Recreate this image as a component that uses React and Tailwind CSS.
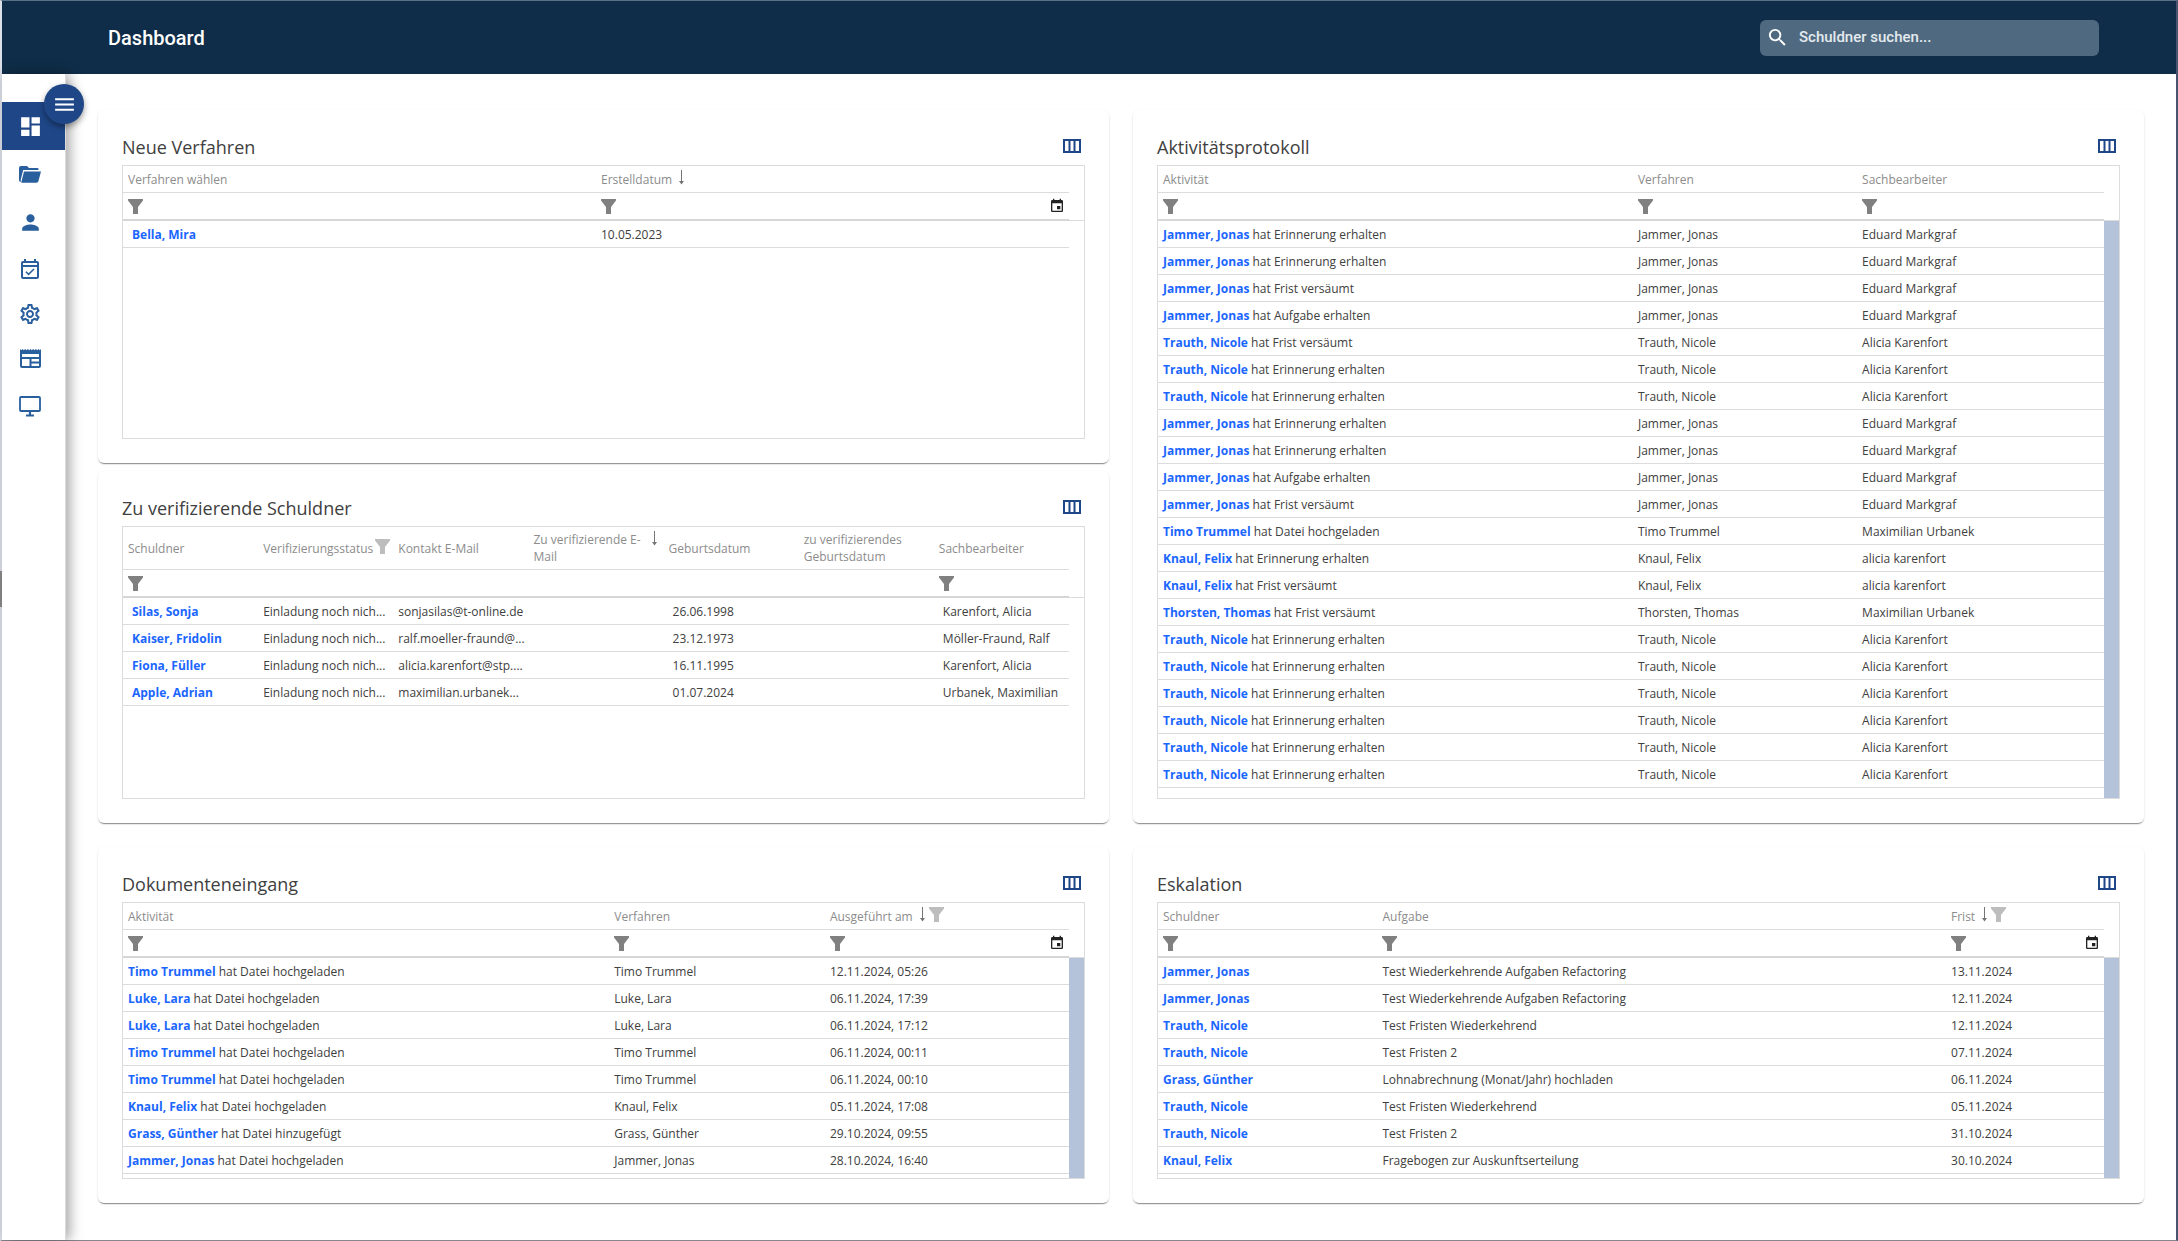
import { useState } from 'react';
import {
  MdDashboard,
  MdEvent,
  MdMenu,
  MdOutlineEventAvailable,
  MdOutlineSettings,
  MdPerson,
  MdSearch,
} from 'react-icons/md';

function FolderIcon() {
  return (
    <svg viewBox="0 0 22 17" className="h-[17px] w-[22px]" fill="currentColor" aria-hidden="true">
      <path d="M2 0h6l2 2h8.500a1 1 0 0 1 1 1v1H4.200L1.800 13.500V16A2 2 0 0 1 0 14V2a2 2 0 0 1 2-2z" />
      <path d="M5 5.500h17l-2.600 9.700a2 2 0 0 1-1.900 1.500H2.200z" />
    </svg>
  );
}

function NewsIcon() {
  return (
    <svg viewBox="0 0 21 19" className="h-[19px] w-[21px]" fill="currentColor" aria-hidden="true">
      <path
        fillRule="evenodd"
        d="M0 0l1.200 1.200L2.500 0l1.300 1.200L5.200 0l1.300 1.200L7.900 0l1.300 1.200L10.500 0l1.300 1.200L13.100 0l1.400 1.200L15.800 0l1.400 1.200L18.500 0l1.300 1.200L21 0v17a2 2 0 0 1-2 2H2a2 2 0 0 1-2-2zM2 5v3h17V5zM2 10v7h7.500v-7zM11.500 10v2.500H19V10zM11.500 14.500V17H19v-2.500z"
      />
    </svg>
  );
}

function MonitorIcon() {
  return (
    <svg viewBox="0 0 22 21" className="h-[21px] w-[22px]" fill="none" stroke="currentColor" strokeWidth="1.800" aria-hidden="true">
      <rect x="1" y="1" width="20" height="14" rx="1" />
      <path d="M11 15v5M7 19.500h8" strokeWidth="2.200" />
    </svg>
  );
}

const NAV = [
  { label: 'Dashboard',     icon: MdDashboard,             size: 25, height: 'h-12', active: true },
  { label: 'Verfahren',     icon: FolderIcon,              height: 'h-12' },
  { label: 'Schuldner',     icon: MdPerson,                size: 25, height: 'h-12' },
  { label: 'Termine',       icon: MdOutlineEventAvailable, size: 24, height: 'h-12' },
  { label: 'Einstellungen', icon: MdOutlineSettings,       size: 24, height: 'h-10' },
  { label: 'Nachrichten',   icon: NewsIcon,                height: 'h-12' },
  { label: 'Bildschirm',    icon: MonitorIcon,             height: 'h-12' },
];

const JAMMER = ['Jammer, Jonas', 'Eduard Markgraf'];
const TRAUTH = ['Trauth, Nicole', 'Alicia Karenfort'];
const TRUMMEL = ['Timo Trummel', 'Maximilian Urbanek'];
const KNAUL = ['Knaul, Felix', 'alicia karenfort'];
const THORSTEN = ['Thorsten, Thomas', 'Maximilian Urbanek'];

const ACTIVITIES = [
  [JAMMER, 'hat Erinnerung erhalten'],
  [JAMMER, 'hat Erinnerung erhalten'],
  [JAMMER, 'hat Frist versäumt'],
  [JAMMER, 'hat Aufgabe erhalten'],
  [TRAUTH, 'hat Frist versäumt'],
  [TRAUTH, 'hat Erinnerung erhalten'],
  [TRAUTH, 'hat Erinnerung erhalten'],
  [JAMMER, 'hat Erinnerung erhalten'],
  [JAMMER, 'hat Erinnerung erhalten'],
  [JAMMER, 'hat Aufgabe erhalten'],
  [JAMMER, 'hat Frist versäumt'],
  [TRUMMEL, 'hat Datei hochgeladen'],
  [KNAUL, 'hat Erinnerung erhalten'],
  [KNAUL, 'hat Frist versäumt'],
  [THORSTEN, 'hat Frist versäumt'],
  [TRAUTH, 'hat Erinnerung erhalten'],
  [TRAUTH, 'hat Erinnerung erhalten'],
  [TRAUTH, 'hat Erinnerung erhalten'],
  [TRAUTH, 'hat Erinnerung erhalten'],
  [TRAUTH, 'hat Erinnerung erhalten'],
  [TRAUTH, 'hat Erinnerung erhalten'],
];

const DOCUMENTS = [
  ['Timo Trummel', 'hat Datei hochgeladen', '12.11.2024, 05:26'],
  ['Luke, Lara', 'hat Datei hochgeladen', '06.11.2024, 17:39'],
  ['Luke, Lara', 'hat Datei hochgeladen', '06.11.2024, 17:12'],
  ['Timo Trummel', 'hat Datei hochgeladen', '06.11.2024, 00:11'],
  ['Timo Trummel', 'hat Datei hochgeladen', '06.11.2024, 00:10'],
  ['Knaul, Felix', 'hat Datei hochgeladen', '05.11.2024, 17:08'],
  ['Grass, Günther', 'hat Datei hinzugefügt', '29.10.2024, 09:55'],
  ['Jammer, Jonas', 'hat Datei hochgeladen', '28.10.2024, 16:40'],
];

const ESCALATIONS = [
  ['Jammer, Jonas', 'Test Wiederkehrende Aufgaben Refactoring', '13.11.2024'],
  ['Jammer, Jonas', 'Test Wiederkehrende Aufgaben Refactoring', '12.11.2024'],
  ['Trauth, Nicole', 'Test Fristen Wiederkehrend', '12.11.2024'],
  ['Trauth, Nicole', 'Test Fristen 2', '07.11.2024'],
  ['Grass, Günther', 'Lohnabrechnung (Monat/Jahr) hochladen', '06.11.2024'],
  ['Trauth, Nicole', 'Test Fristen Wiederkehrend', '05.11.2024'],
  ['Trauth, Nicole', 'Test Fristen 2', '31.10.2024'],
  ['Knaul, Felix', 'Fragebogen zur Auskunftserteilung', '30.10.2024'],
];

const DEBTORS = [
  ['Silas, Sonja', 'sonjasilas@t-online.de', '26.06.1998', 'Karenfort, Alicia'],
  ['Kaiser, Fridolin', 'ralf.moeller-fraund@...', '23.12.1973', 'Möller-Fraund, Ralf'],
  ['Fiona, Füller', 'alicia.karenfort@stp....', '16.11.1995', 'Karenfort, Alicia'],
  ['Apple, Adrian', 'maximilian.urbanek...', '01.07.2024', 'Urbanek, Maximilian'],
];

function Funnel({ className }) {
  return (
    <svg viewBox="0 0 15 15" className={`size-[15px] shrink-0 ${className}`} fill="currentColor" aria-hidden="true">
      <path d="M0 0h15v1.600L10 8v7H5V8L0 1.600z" />
    </svg>
  );
}

function SortArrow() {
  return (
    <svg viewBox="0 0 7 15" className="h-[15px] w-[7px] shrink-0 text-[#757575]" fill="currentColor" aria-hidden="true">
      <path d="M3 0h1v11h2L3.500 14.500 1 11h2z" />
    </svg>
  );
}

function ColumnsIcon() {
  return (
    <svg viewBox="0 0 18 14" className="h-[14px] w-[18px]" fill="none" stroke="currentColor" strokeWidth="2" aria-hidden="true">
      <path d="M1 1h16v12H1zM6.500 1v12M11.500 1v12" />
    </svg>
  );
}

function Name({ children }) {
  return <a href="#" className="font-bold text-[#1a66ff]">{children}</a>;
}

function HeaderCell({ column }) {
  return (
    <th scope="col" className="border-b border-[#dcdcdc] px-[5px] text-left font-normal text-[#8c8c8c]">
      <div className="flex items-center">
        <span>{column.label}</span>
        {column.sorted && (
          <span className={`mr-px ml-1.5 flex pb-1 ${column.wraps ? 'self-start' : ''}`}><SortArrow /></span>
        )}
        {column.filtered && <span className="ml-0.5 flex pb-1"><Funnel className="text-[#bdbdbd]" /></span>}
      </div>
    </th>
  );
}

function FilterCell({ column }) {
  return (
    <td className="border-b-2 border-[#d6d6d6] px-1">
      <div className="flex items-center justify-between">
        {column.filter && (
          <button type="button" aria-label={`${column.label} filtern`} className="px-px">
            <Funnel className="text-[#808080]" />
          </button>
        )}
        {column.date && (
          <button type="button" aria-label="Datum wählen" className="text-[#222]">
            <MdEvent size={16} />
          </button>
        )}
      </div>
    </td>
  );
}

function DataCard({ title, columns, rows, tall, scrollable, minHeight = '' }) {
  return (
    <section className="flex flex-col rounded-md bg-white px-6 pb-6 shadow-[0_2px_1px_-1px_rgba(0,0,0,0.35),0_1px_2px_0_rgba(0,0,0,0.18)]">
      <div className="flex h-[55px] items-end justify-between pr-1 pb-1">
        <h2 className="text-[18px] leading-[27px] text-[#404040]">{title}</h2>
        <button type="button" aria-label="Spalten wählen" className="mb-2 text-[#1f4788]">
          <ColumnsIcon />
        </button>
      </div>

      <div className={`flex flex-1 border border-[#dcdcdc] ${minHeight}`}>
        <div className="min-w-0 flex-1 pb-1">
          <table className="w-full table-fixed border-separate border-spacing-0 text-[12px] leading-[17px]">
            <colgroup>
              {columns.map((c) => <col key={c.label} className={c.width} />)}
            </colgroup>
            <thead>
              <tr className={tall ? 'h-[43px]' : 'h-[27px]'}>
                {columns.map((c) => <HeaderCell key={c.label} column={c} />)}
              </tr>
              <tr className="h-[28px]">
                {columns.map((c) => <FilterCell key={c.label} column={c} />)}
              </tr>
            </thead>
            <tbody>
              {rows.map((row, i) => (
                <tr key={i} className="h-[27px] text-[#404040]">
                  {row.map((cell, j) => (
                    <td
                      key={j}
                      className={`truncate border-b border-[#dcdcdc] ${columns[j].inset ? 'pl-[9px]' : 'pl-[5px]'}`}
                    >
                      {cell}
                    </td>
                  ))}
                </tr>
              ))}
            </tbody>
          </table>
        </div>

        {/* Scroll gutter */}
        <div className="flex w-[15px] shrink-0 flex-col">
          <div className={`border-b border-[#dcdcdc] ${tall ? 'h-[71px]' : 'h-[55px]'}`} />
          {scrollable && <div className="flex-1 bg-[#b4c2da]" />}
        </div>
      </div>
    </section>
  );
}

function Sidebar() {
  return (
    <nav className="relative z-10 w-16 shrink-0 border-r border-[#dcdcdc] bg-white pt-7 shadow-[4px_0_12px_rgba(0,0,0,0.35)]">
      <ul>
        {NAV.map(({ label, icon: Icon, size, height, active }) => (
          <li key={label}>
            <a
              href="#"
              aria-label={label}
              className={`flex items-center pl-[15px] ${height} ${active ? 'bg-[#1f4788] text-white' : 'text-[#2a5f9e]'}`}
            >
              <span className="flex w-[26px] justify-center"><Icon size={size} /></span>
            </a>
          </li>
        ))}
      </ul>
      <button
        type="button"
        aria-label="Menü öffnen"
        className="absolute top-2.5 -right-[19px] flex size-10 items-center justify-center rounded-full bg-[#1f4788] text-white shadow-[0_3px_6px_rgba(0,0,0,0.4)]"
      >
        <MdMenu size={25} />
      </button>
    </nav>
  );
}

export default function App() {
  const [query, setQuery] = useState('');

  return (
    <div className="relative flex min-h-screen flex-col border-t border-r-2 border-b border-l-2 border-t-[#5a7287] border-r-[#4a5470] border-b-[#85858f] border-l-[#dcdfe8] bg-white font-['Open_Sans','Noto_Sans',sans-serif]">
      <header className="flex h-[73px] items-center justify-between bg-[#0f2d48] pr-[77px] pl-[106px] font-[Roboto,sans-serif]">
        <h1 className="text-[20px] font-medium text-white">Dashboard</h1>
        <label className="flex h-9 w-[339px] items-center rounded-md bg-[#4f6a80] pl-1.5 text-white">
          <MdSearch size={23} />
          <input
            type="text"
            value={query}
            onChange={(e) => setQuery(e.target.value)}
            placeholder="Schuldner suchen..."
            aria-label="Schuldner suchen"
            className="ml-2.5 min-w-0 flex-1 bg-transparent text-[15px] font-medium outline-none placeholder:text-[#e4eaef]"
          />
        </label>
      </header>

      {/* Drag handle on the window edge */}
      <div className="absolute top-[570px] -left-0.5 h-9 w-0.5 bg-[#8a8a8a]" />

      <div className="flex flex-1">
        <Sidebar />
        <main className="grid min-w-0 flex-1 grid-cols-2 content-start gap-6 px-8 pt-9 pb-9">
          <div className="flex flex-col gap-2">
            <DataCard
              title="Neue Verfahren"
              minHeight="min-h-[274px]"
              columns={[
                { label: 'Verfahren wählen', width: 'w-1/2', filter: true, inset: true },
                { label: 'Erstelldatum', width: 'w-1/2', filter: true, sorted: true, date: true },
              ]}
              rows={[[<Name>Bella, Mira</Name>, '10.05.2023']]}
            />
            <DataCard
              title="Zu verifizierende Schuldner"
              minHeight="min-h-[273px]"
              tall
              columns={[
                { label: 'Schuldner', filter: true, inset: true },
                { label: 'Verifizierungsstatus', filtered: true },
                { label: 'Kontakt E-Mail' },
                { label: 'Zu verifizierende E-Mail', sorted: true, wraps: true },
                { label: 'Geburtsdatum', inset: true },
                { label: 'zu verifizierendes Geburtsdatum' },
                { label: 'Sachbearbeiter', filter: true, inset: true },
              ]}
              rows={DEBTORS.map(([name, mail, birthday, clerk]) => [
                <Name>{name}</Name>, 'Einladung noch nich...', mail, '', birthday, '', clerk,
              ])}
            />
          </div>

          <DataCard
            title="Aktivitätsprotokoll"
            scrollable
            columns={[
              { label: 'Aktivität', width: 'w-[50.2%]', filter: true },
              { label: 'Verfahren', width: 'w-[23.7%]', filter: true },
              { label: 'Sachbearbeiter', width: 'w-[26.1%]', filter: true },
            ]}
            rows={ACTIVITIES.map(([[name, clerk], action]) => [
              <><Name>{name}</Name> {action}</>, name, clerk,
            ])}
          />

          <DataCard
            title="Dokumenteneingang"
            scrollable
            columns={[
              { label: 'Aktivität', width: 'w-[51.4%]', filter: true },
              { label: 'Verfahren', width: 'w-[22.8%]', filter: true },
              { label: 'Ausgeführt am', width: 'w-[25.8%]', filter: true, sorted: true, filtered: true, date: true },
            ]}
            rows={DOCUMENTS.map(([name, action, date]) => [
              <><Name>{name}</Name> {action}</>, name, date,
            ])}
          />

          <DataCard
            title="Eskalation"
            scrollable
            columns={[
              { label: 'Schuldner', width: 'w-[23.2%]', filter: true },
              { label: 'Aufgabe', width: 'w-[60.1%]', filter: true },
              { label: 'Frist', width: 'w-[16.7%]', filter: true, sorted: true, filtered: true, date: true },
            ]}
            rows={ESCALATIONS.map(([name, task, date]) => [<Name>{name}</Name>, task, date])}
          />
        </main>
      </div>
    </div>
  );
}
